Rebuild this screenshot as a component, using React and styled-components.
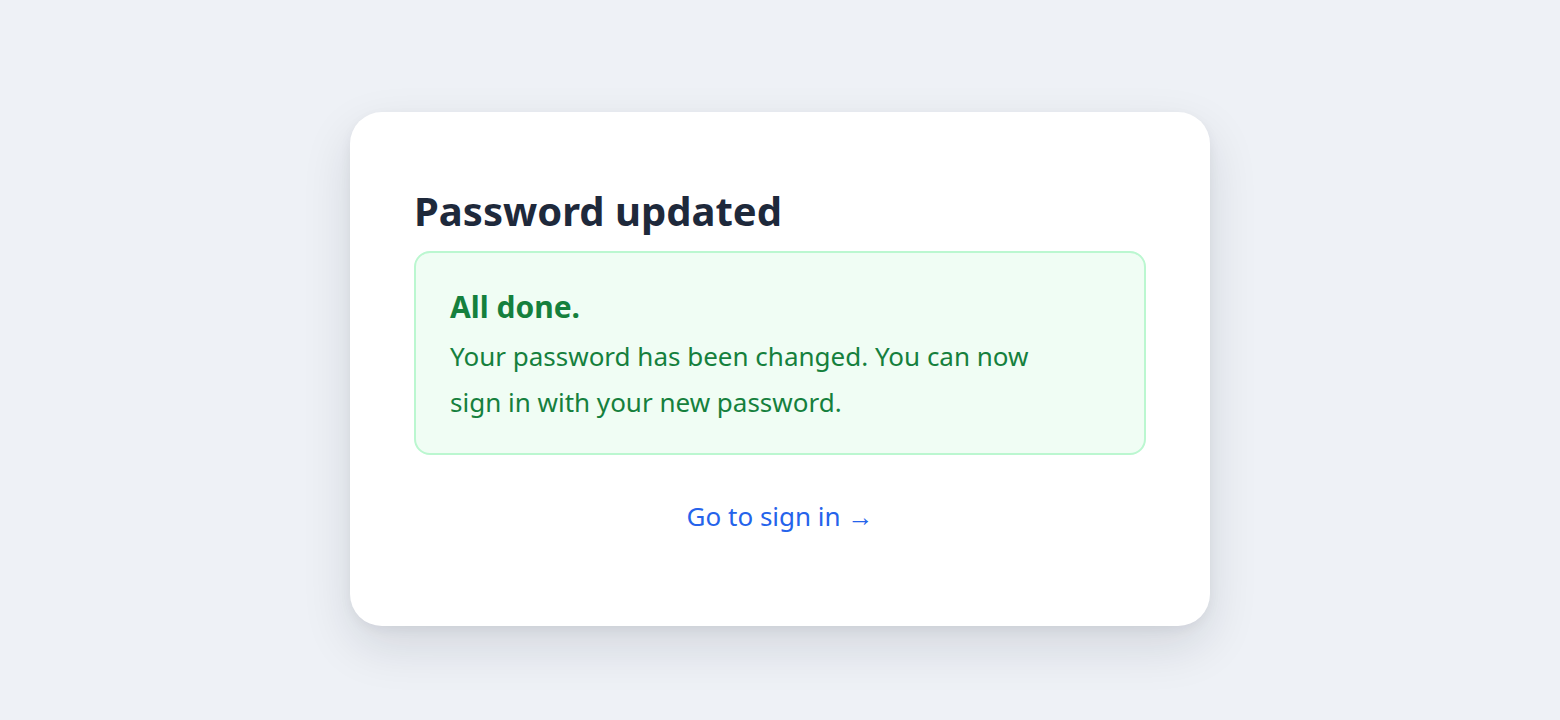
import React from 'react';
import styled, { createGlobalStyle } from 'styled-components';

const GlobalStyle = createGlobalStyle`
    html, body {
        margin: 0;
        padding: 0;
        background: #eef1f6;
        font-family: 'Noto Sans', 'Open Sans', sans-serif;
    }
`;

const Page = styled.main`
    min-height: 100vh;
    box-sizing: border-box;
    display: flex;
    justify-content: center;
    align-items: flex-start;
    padding-top: 112px;
`;

const Card = styled.section`
    width: 860px;
    box-sizing: border-box;
    background: #fff;
    border-radius: 32px;
    padding: 71px 64px 90px;
    box-shadow: 0 20px 50px rgba(15, 23, 42, 0.12), 0 4px 12px rgba(15, 23, 42, 0.05);
`;

const Title = styled.h1`
    margin: 0 0 12px;
    font-size: 40px;
    line-height: 56px;
    font-weight: 700;
    color: #1e293b;
`;

const Alert = styled.div`
    background: #f0fdf4;
    border: 2px solid #bbf7d0;
    border-radius: 16px;
    padding: 34px 60px 28px 34px;
    color: #15803d;
`;

const AlertTitle = styled.p`
    margin: 0 0 6px;
    font-size: 30px;
    line-height: 40px;
    font-weight: 700;
`;

const AlertText = styled.p`
    margin: 0;
    font-size: 26px;
    line-height: 46px;
`;

const Footer = styled.div`
    margin-top: 41px;
    text-align: center;
`;

const Link = styled.a`
    font-size: 26px;
    line-height: 40px;
    color: #2563eb;
    text-decoration: none;
`;

export default function App() {
    return (
        <>
            <GlobalStyle />
            <Page>
                <Card>
                    <Title>Password updated</Title>
                    <Alert>
                        <AlertTitle>All done.</AlertTitle>
                        <AlertText>Your password has been changed. You can now sign in with your new password.</AlertText>
                    </Alert>
                    <Footer>
                        <Link href="#">Go to sign in →</Link>
                    </Footer>
                </Card>
            </Page>
        </>
    );
}
